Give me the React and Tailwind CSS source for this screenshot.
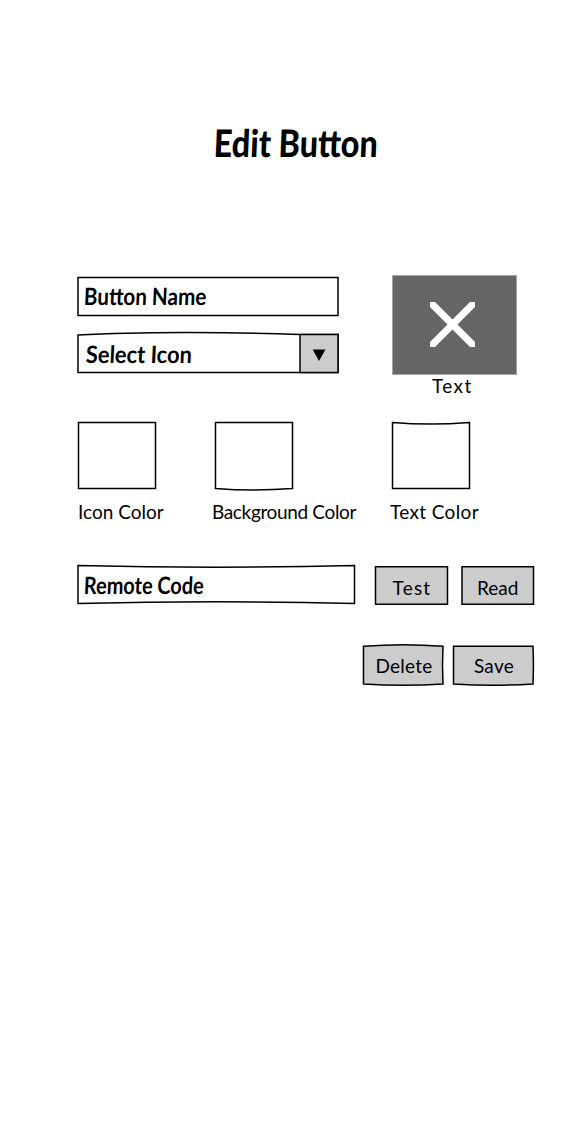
import React from "react";

/* A box whose outline is a slightly uneven, hand-drawn stroke. */
function SketchBox({ className, path, fill = "#ffffff", children }) {
  return (
    <div className={`relative shrink-0 ${className}`}>
      <svg className="absolute inset-0 h-full w-full overflow-visible" aria-hidden="true">
        <path d={path} fill={fill} stroke="#000" strokeWidth="1.5" strokeLinejoin="miter" />
      </svg>
      {children}
    </div>
  );
}

const brush = "relative block origin-left whitespace-nowrap font-['Lato',sans-serif] font-bold text-black";
const hand = "relative block whitespace-nowrap font-['Lato',sans-serif] text-[19px] leading-[24px] text-black";

export default function App() {
  return (
    <main className="h-[1146px] w-[588px] overflow-hidden bg-white">
      <h1 className="ml-[214px] pt-[117px]">
        <span className="block w-max origin-left -skew-x-3 scale-x-[0.85] whitespace-nowrap font-['Lato',sans-serif] text-[38px] font-black leading-[50px] text-black">
          Edit Button
        </span>
      </h1>

      <section className="ml-[78px] mt-[108px] flex items-start">
        <div className="flex w-[260px] flex-col gap-[19px] pt-[2px]">
          <SketchBox className="flex h-[38px] w-[260px] items-center pl-[6px]" path="M0 0.5H260V38.5H0Z">
            <span className={`${brush} -skew-x-3 scale-x-[0.86] text-[24px]`}>Button Name</span>
          </SketchBox>
          <SketchBox className="flex h-[38px] w-[260px] items-center pl-[8px]" path="M0 1C60 -2.2 150 -2.2 222 0.5H260V38.5H0Z">
            <span className={`${brush} -skew-x-3 scale-x-[0.91] pt-[2px] text-[24px]`}>Select Icon</span>
            <svg className="absolute right-0 top-0 h-[38px] w-[38px] overflow-visible" aria-hidden="true">
              <path d="M0 0.5H38V38.5H0Z" fill="#ccc" stroke="#000" strokeWidth="1.5" />
              <path d="M12.7 15.5H25.5L19 27Z" />
            </svg>
          </SketchBox>
        </div>
        <div className="ml-[53.5px] flex w-[125px] flex-col">
          <div className="flex h-[100px] w-[125px] items-center border border-[#a6a6a6] bg-[#666] pl-[37.5px]">
            <svg className="-mt-px h-[45px] w-[45px]" viewBox="0 0 45 45" aria-hidden="true">
              <path fill="#fff" d="M0 0H5L22.5 17.5L40 0H45V5L27.5 22.5L45 40V45H40L22.5 27.5L5 45H0V40L17.5 22.5L0 5Z" />
            </svg>
          </div>
          <span className={`${hand} -mt-px pl-[40.5px] tracking-[1.4px]`}>Text</span>
        </div>
      </section>

      <section className="ml-[78px] mt-[24px] flex items-start">
        <div className="w-[134px]">
          <SketchBox className="h-[66px] w-[77px]" path="M0.5 0.5H77.5V66.5H0.5Z" />
          <span className={`${hand} mt-[12px]`}>Icon Color</span>
        </div>
        <div className="w-[178px]">
          <SketchBox className="ml-[3px] h-[66px] w-[77px]" path="M0.5 0.5H77.5V66.5Q38 69.5 0.5 66.5Z" />
          <span className={`${hand} mt-[12px] tracking-[-0.35px]`}>Background Color</span>
        </div>
        <div>
          <SketchBox className="ml-[2px] h-[66px] w-[77px]" path="M0.5 0.5Q38 3.5 77.5 0.5V66.5H0.5Z" />
          <span className={`${hand} mt-[12px] tracking-[0.35px]`}>Text Color</span>
        </div>
      </section>

      <section className="ml-[78px] mt-[42px] flex items-start">
        <SketchBox className="flex h-[38px] w-[276.5px] items-center pl-[6px]" path="M0 -0.5Q138 3 276.5 -0.5V37.5Q138 34 0 37.5Z">
          <span className={`${brush} -mt-px -skew-x-3 scale-x-[0.83] text-[24px]`}>Remote Code</span>
        </SketchBox>
        <SketchBox className="ml-[20.5px] flex h-[38px] w-[72px] items-center justify-center pl-[2px]" fill="#ccc" path="M0.5 0.8H72.5V38.3H0.5Z">
          <span className={`${hand} pt-[5px] tracking-[1.2px]`}>Test</span>
        </SketchBox>
        <SketchBox className="ml-[15px] flex h-[38px] w-[71.5px] items-center justify-center" fill="#ccc" path="M0 0.8H71.5V38.3H0Z">
          <span className={`${hand} pt-[5px]`}>Read</span>
        </SketchBox>
      </section>

      <section className="ml-[363px] mt-[42px] flex items-start gap-[10px]">
        <SketchBox className="flex h-[38px] w-[80px] items-center justify-center pl-[2px]" fill="#ccc" path="M0.5 0.3Q40 -2.7 80 0.3Q79 19 80 38Q40 40.5 0.5 38Z">
          <span className={`${hand} pt-[2px] tracking-[0.2px]`}>Delete</span>
        </SketchBox>
        <SketchBox className="flex h-[38px] w-[80px] items-center justify-center pl-[2px]" fill="#ccc" path="M0.5 0.3H80Q80.8 19 80 38Q40 40.5 0.5 38Z">
          <span className={`${hand} pt-[2px] tracking-[0.3px]`}>Save</span>
        </SketchBox>
      </section>
    </main>
  );
}
